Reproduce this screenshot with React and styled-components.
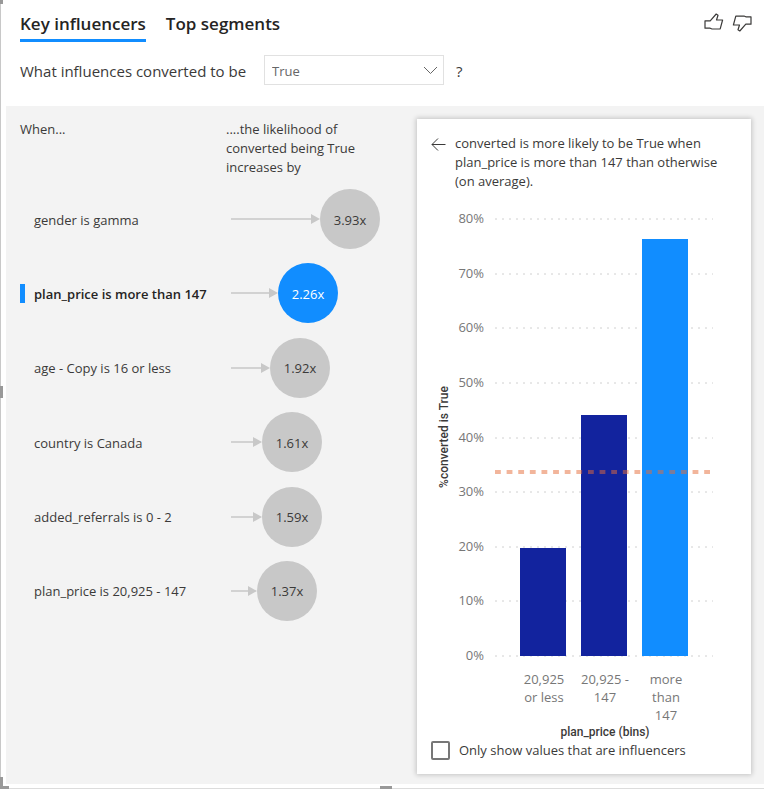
import React, { useState } from "react";
import styled, { createGlobalStyle } from "styled-components";

const sans = '"Open Sans", "Noto Sans", sans-serif';

const GlobalStyle = createGlobalStyle`
  *, *::before, *::after { box-sizing: border-box; }
  body { margin: 0; background: #fff; font-family: ${sans}; font-size: 13px; line-height: 19px; color: #3b3a39; }
  button, select, input { font: inherit; color: inherit; }
`;

const Visual = styled.main`
  position: relative;
  display: flex;
  flex-direction: column;
  min-height: 100vh;
  padding: 0 0 4px 5px;
  border-left: 1px solid #c8c8c8;
  border-bottom: 1px solid #dcdcdc;
`;

const Handle = styled.span`
  position: absolute;
  background: #999;
  width: ${(p) => (p.$side ? "3px" : "12px")};
  height: ${(p) => (p.$side ? "12px" : "3px")};
  ${(p) => p.$at}
`;

const Header = styled.header`
  display: flex;
  justify-content: space-between;
  align-items: flex-start;
  padding: 12px 12px 0 14px;
`;

const Tabs = styled.nav`
  display: flex;
  gap: 20px;
`;

const Tab = styled.button`
  padding: 0 0 4px;
  border: 0;
  border-bottom: 3px solid ${(p) => (p.$active ? "#118dff" : "transparent")};
  background: none;
  font-size: 17px;
  font-weight: 600;
  line-height: 23px;
  color: #252423;
  cursor: pointer;
`;

const Feedback = styled.div`
  display: flex;
  gap: 8px;
`;

const IconButton = styled.button`
  display: flex;
  padding: 0;
  border: 0;
  background: none;
  color: #3b3a39;
  cursor: pointer;
`;

const Question = styled.div`
  display: flex;
  align-items: center;
  gap: 12px;
  padding: 13px 14px 21px;
  font-size: 15px;
`;

const QuestionLabel = styled.label`
  min-width: 232px;
  padding-top: 2px;
`;

const QuestionMark = styled.span`
  padding-top: 2px;
`;

const SelectBox = styled.span`
  position: relative;
  display: flex;
  width: 180px;
`;

const Select = styled.select`
  appearance: none;
  width: 100%;
  height: 30px;
  padding: 3px 28px 0 7px;
  border: 1px solid #e1e1e1;
  border-radius: 0;
  background: #fff;
  font-size: 13px;
  color: #666;
`;

const Chevron = styled.svg`
  position: absolute;
  right: 6px;
  top: 11px;
  pointer-events: none;
`;

const Body = styled.section`
  flex: 1;
  display: grid;
  grid-template-columns: 411fr 334fr;
  align-items: start;
  padding: 13px 13px 10px 0;
  background: #f3f3f3;
`;

const Influencers = styled.div`
  padding-left: 14px;
`;

const ColumnHeads = styled.div`
  display: grid;
  grid-template-columns: 206px 1fr;
  padding-top: 1px;
`;

const ColumnHead = styled.h2`
  margin: 0;
  max-width: 150px;
  font-size: 13px;
  font-weight: 400;
`;

const InfluencerList = styled.ul`
  display: flex;
  flex-direction: column;
  justify-content: space-between;
  height: 432px;
  margin: 12px 0 0;
  padding: 0;
  list-style: none;
`;

const InfluencerRow = styled.button`
  display: grid;
  grid-template-columns: 14px 197px auto 60px;
  justify-content: start;
  align-items: center;
  width: 100%;
  padding: 0;
  border: 0;
  background: none;
  text-align: left;
  font-weight: ${(p) => (p.$active ? 600 : 400)};
  color: ${(p) => (p.$active ? "#252423" : "#3b3a39")};
  cursor: pointer;
`;

const RowLabel = styled.span`
  padding-top: 2px;
`;

const Marker = styled.span`
  width: 5px;
  height: 19px;
  background: ${(p) => (p.$active ? "#118dff" : "transparent")};
`;

const Bubble = styled.span`
  display: flex;
  align-items: center;
  justify-content: center;
  width: 60px;
  height: 60px;
  padding-top: 2px;
  border-radius: 50%;
  font-weight: 400;
  background: ${(p) => (p.$active ? "#118dff" : "#c8c8c8")};
  color: ${(p) => (p.$active ? "#fff" : "#3b3a39")};
`;

const Card = styled.article`
  display: flex;
  flex-direction: column;
  padding: 15px 14px 14px;
  background: #fff;
  box-shadow: 0 0 5px 1px rgba(0, 0, 0, 0.2);
`;

const CardHead = styled.div`
  display: flex;
  align-items: flex-start;
  gap: 9px;
  padding-bottom: 9px;
`;

const BackButton = styled(IconButton)`
  padding-top: 3px;
`;

const CardTitle = styled.p`
  margin: 0;
  max-width: 270px;
`;

const Chart = styled.svg`
  display: block;
  width: 100%;
  height: auto;
`;

const TickText = styled.text`
  font-size: 13px;
  fill: #777;
  text-anchor: ${(p) => p.$anchor};
`;

const AxisTitle = styled.text`
  font-family: Roboto, sans-serif;
  font-size: 12px;
  font-weight: 500;
  fill: #3b3a39;
  text-anchor: middle;
`;

const CheckLabel = styled.label`
  display: flex;
  align-items: center;
  gap: 9px;
  cursor: pointer;
`;

const Checkbox = styled.input`
  appearance: none;
  width: 19px;
  height: 19px;
  margin: 0;
  border: 2px solid #777;
  border-radius: 2px;
  background: #fff;
  &:checked { background: #777; }
`;

const influencers = [
  { label: "gender is gamma", value: "3.93x", arrow: 89 },
  { label: "plan_price is more than 147", value: "2.26x", arrow: 47 },
  { label: "age - Copy is 16 or less", value: "1.92x", arrow: 39 },
  { label: "country is Canada", value: "1.61x", arrow: 31 },
  { label: "added_referrals is 0 - 2", value: "1.59x", arrow: 31 },
  { label: "plan_price is 20,925 - 147", value: "1.37x", arrow: 26 },
];

const bins = [
  { lines: ["20,925", "or less"], percent: 19.8, color: "#12239e" },
  { lines: ["20,925 -", "147"], percent: 44.2, color: "#12239e" },
  { lines: ["more", "than", "147"], percent: 76.3, color: "#118dff" },
];

const ticks = [80, 70, 60, 50, 40, 30, 20, 10, 0];
const BASE = 456;
const yFor = (percent) => BASE - (percent * 437) / 80;

function ThumbUp() {
  return (
    <svg width="20" height="20" viewBox="0 0 20 20" fill="none" stroke="currentColor" strokeWidth="1.2" strokeLinejoin="round" aria-hidden="true">
      <path d="M1 8.8H6.2L12.2 2L14 3.2L12.5 8H18.6L16.2 16.8L8 17L6.2 16.2H1Z" />
    </svg>
  );
}

function ThumbDown() {
  return (
    <svg width="20" height="20" viewBox="0 0 20 20" fill="none" stroke="currentColor" strokeWidth="1.2" strokeLinejoin="round" aria-hidden="true">
      <path d="M19 12.2H13.8L7.8 19L6 17.8L7.5 13H1.4L3.8 4.2L12 4L13.8 4.8H19Z" />
    </svg>
  );
}

function Arrow({ length }) {
  return (
    <svg width={length} height="10" aria-hidden="true">
      <path d={`M0 5H${length - 9}`} stroke="#d2d2d2" strokeWidth="2" />
      <path d={`M${length - 9} 0L${length} 5L${length - 9} 10Z`} fill="#c8c8c8" />
    </svg>
  );
}

function BinChart() {
  return (
    <Chart viewBox="0 0 306 541" role="img" aria-label="%converted is True by plan_price (bins)">
      {ticks.map((t) => (
        <g key={t}>
          <path d={`M64 ${Math.round(yFor(t))}H282`} stroke="#d0d0d0" strokeWidth="1" strokeDasharray="2 5" />
          <TickText $anchor="end" x="53" y={Math.round(yFor(t)) + 4}>{t}%</TickText>
        </g>
      ))}
      {bins.map((b, i) => (
        <g key={b.lines.join(" ")}>
          <rect x={89 + i * 61} y={Math.round(yFor(b.percent))} width="46" height={BASE - Math.round(yFor(b.percent))} fill={b.color} />
          {b.lines.map((line, n) => (
            <TickText key={line} $anchor="middle" x={113 + i * 61} y={484 + n * 18}>{line}</TickText>
          ))}
        </g>
      ))}
      <path d="M64 272H279" pathLength="222" stroke="#e66c37" strokeOpacity="0.5" strokeWidth="4" strokeDasharray="6 6" />
      <AxisTitle transform="translate(17 237) rotate(-90)">%converted is True</AxisTitle>
      <AxisTitle x="174" y="536">plan_price (bins)</AxisTitle>
    </Chart>
  );
}

export default function App() {
  const [tab, setTab] = useState("Key influencers");
  const [selected, setSelected] = useState(1);
  return (
    <Visual>
      <GlobalStyle />
      <Header>
        <Tabs>
          {["Key influencers", "Top segments"].map((name) => (
            <Tab key={name} type="button" $active={tab === name} onClick={() => setTab(name)}>{name}</Tab>
          ))}
        </Tabs>
        <Feedback>
          <IconButton type="button" aria-label="Like"><ThumbUp /></IconButton>
          <IconButton type="button" aria-label="Dislike"><ThumbDown /></IconButton>
        </Feedback>
      </Header>
      <Question>
        <QuestionLabel htmlFor="outcome">What influences converted to be</QuestionLabel>
        <SelectBox>
          <Select id="outcome" defaultValue="True">
            <option>True</option>
            <option>False</option>
          </Select>
          <Chevron width="15" height="9" fill="none" stroke="#666" aria-hidden="true">
            <path d="M1 1L7.5 7.5L14 1" />
          </Chevron>
        </SelectBox>
        <QuestionMark>?</QuestionMark>
      </Question>
      <Body>
        <Influencers>
          <ColumnHeads>
            <ColumnHead>When...</ColumnHead>
            <ColumnHead>....the likelihood of converted being True increases by</ColumnHead>
          </ColumnHeads>
          <InfluencerList>
            {influencers.map((item, i) => (
              <li key={item.label}>
                <InfluencerRow type="button" $active={i === selected} onClick={() => setSelected(i)}>
                  <Marker $active={i === selected} />
                  <RowLabel>{item.label}</RowLabel>
                  <Arrow length={item.arrow} />
                  <Bubble $active={i === selected}>{item.value}</Bubble>
                </InfluencerRow>
              </li>
            ))}
          </InfluencerList>
        </Influencers>
        <Card>
          <CardHead>
            <BackButton type="button" aria-label="Back">
              <svg width="15" height="14" fill="none" stroke="currentColor" aria-hidden="true">
                <path d="M14.5 7.5H1M7 1.5L1 7.5L7 13.5" />
              </svg>
            </BackButton>
            <CardTitle>converted is more likely to be True when plan_price is more than 147 than otherwise (on average).</CardTitle>
          </CardHead>
          <BinChart />
          <CheckLabel>
            <Checkbox type="checkbox" />
            Only show values that are influencers
          </CheckLabel>
        </Card>
      </Body>
      <Handle $side $at="left: -1px; top: -8px;" />
      <Handle $side $at="left: -1px; top: calc(50% - 8px);" />
      <Handle $side $at="left: -1px; bottom: -1px;" />
      <Handle $at="left: -4px; bottom: -1px;" />
      <Handle $at="left: calc(50% - 3px); bottom: -1px;" />
    </Visual>
  );
}
